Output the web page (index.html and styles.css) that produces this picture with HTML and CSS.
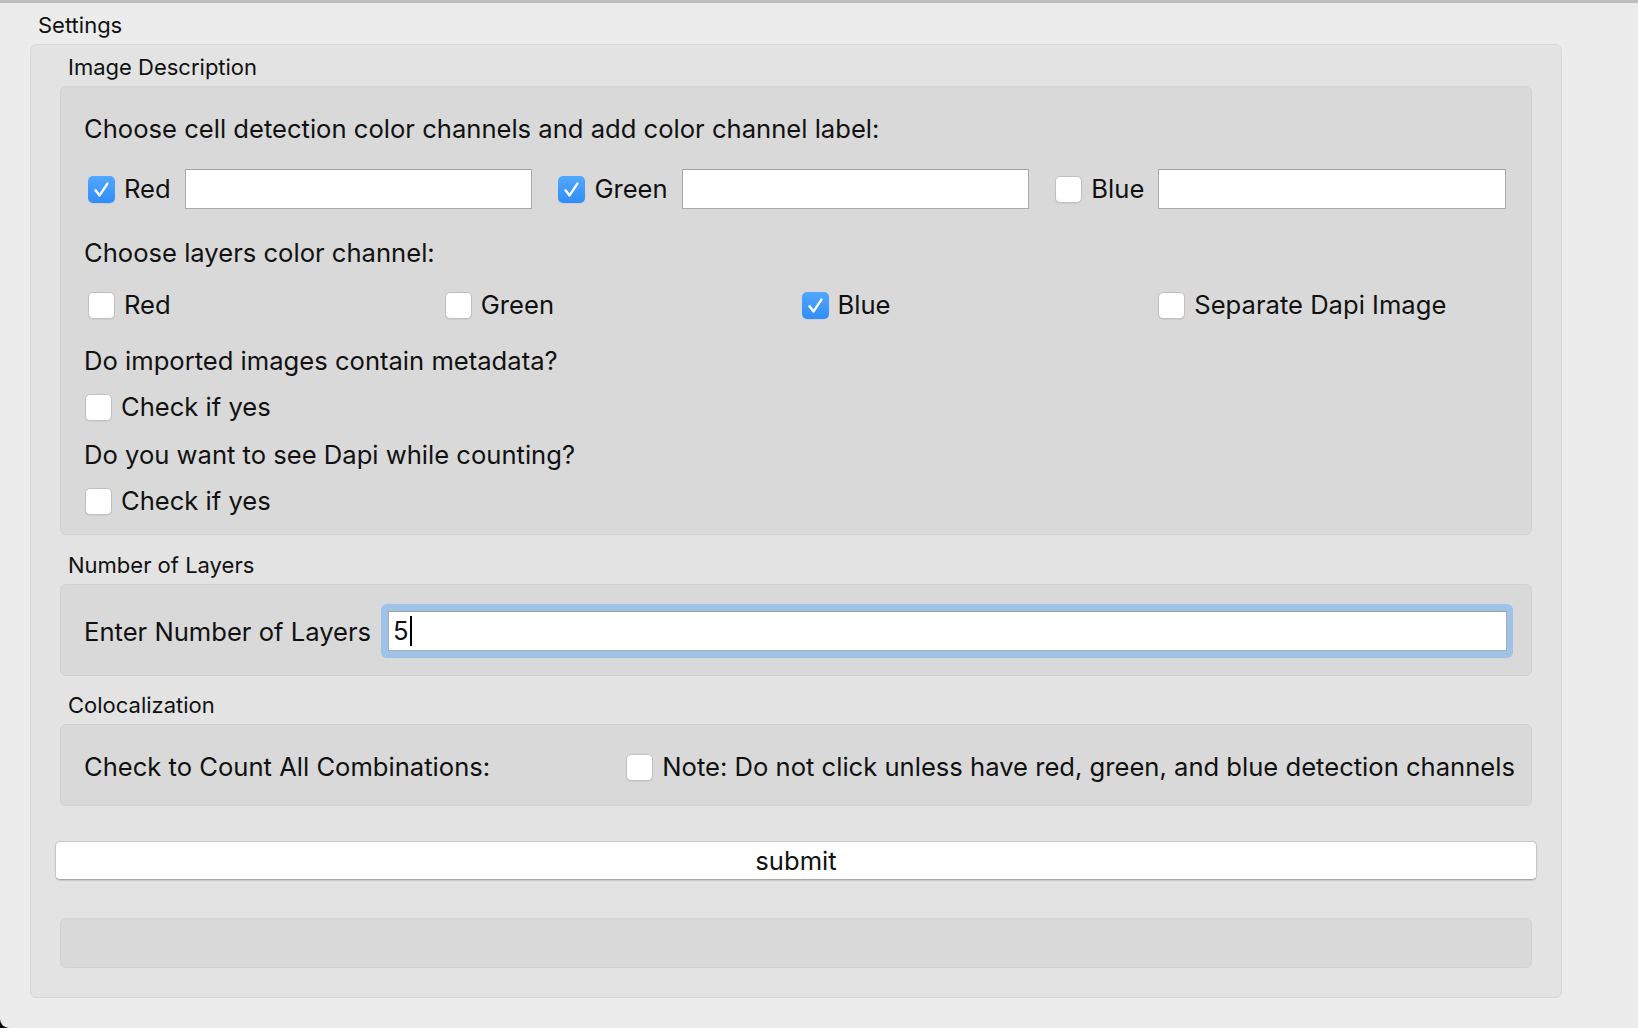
FILE: index.html
```html
<!DOCTYPE html>
<html lang="en">
<head>
<meta charset="utf-8">
<title>Settings</title>
<link rel="stylesheet" href="styles.css">
</head>
<body>
<div class="window">
  <div class="win-title">Settings</div>
  <div class="group">
    <div class="sec-title">Image Description</div>
    <div class="panel panel-desc">
      <div class="line l1">Choose cell detection color channels and add color channel label:</div>
      <div class="row-inputs">
        <span class="cb checked"><svg viewBox="0 0 27 27" width="27" height="27"><path d="M7.5 14.2 L11.6 19.4 L19.4 7.6" fill="none" stroke="#fff" stroke-width="2.4" stroke-linecap="round" stroke-linejoin="round"/></svg></span>
        <span class="cb-label">Red</span>
        <div class="field"></div>
        <span class="cb checked"><svg viewBox="0 0 27 27" width="27" height="27"><path d="M7.5 14.2 L11.6 19.4 L19.4 7.6" fill="none" stroke="#fff" stroke-width="2.4" stroke-linecap="round" stroke-linejoin="round"/></svg></span>
        <span class="cb-label">Green</span>
        <div class="field"></div>
        <span class="cb"></span>
        <span class="cb-label">Blue</span>
        <div class="field"></div>
      </div>
      <div class="line l2">Choose layers color channel:</div>
      <div class="row-grid">
        <div class="opt"><span class="cb"></span><span class="cb-label">Red</span></div>
        <div class="opt"><span class="cb"></span><span class="cb-label">Green</span></div>
        <div class="opt"><span class="cb checked"><svg viewBox="0 0 27 27" width="27" height="27"><path d="M7.5 14.2 L11.6 19.4 L19.4 7.6" fill="none" stroke="#fff" stroke-width="2.4" stroke-linecap="round" stroke-linejoin="round"/></svg></span><span class="cb-label">Blue</span></div>
        <div class="opt"><span class="cb"></span><span class="cb-label">Separate Dapi Image</span></div>
      </div>
      <div class="line l3">Do imported images contain metadata?</div>
      <div class="opt row-yes r3"><span class="cb"></span><span class="cb-label">Check if yes</span></div>
      <div class="line l4">Do you want to see Dapi while counting?</div>
      <div class="opt row-yes r4"><span class="cb"></span><span class="cb-label">Check if yes</span></div>
    </div>

    <div class="sec-title t2">Number of Layers</div>
    <div class="panel panel-layers">
      <span class="layers-label">Enter Number of Layers</span>
      <div class="focus-ring">
        <div class="field field-focus">5<span class="caret"></span></div>
      </div>
    </div>

    <div class="sec-title t3">Colocalization</div>
    <div class="panel panel-coloc">
      <span class="coloc-label">Check to Count All Combinations:</span>
      <div class="opt"><span class="cb"></span><span class="cb-label">Note: Do not click unless have red, green, and blue detection channels</span></div>
    </div>

    <button class="submit" type="button">submit</button>

    <div class="panel panel-empty"></div>
  </div>
</div>
</body>
</html>
```

FILE: styles.css
```css
html {
  background: #000;
}
body {
  margin: 0;
  overflow: hidden;
  font-family: "Inter", "Liberation Sans", sans-serif;
  color: #111;
}
.window {
  width: 1638px;
  height: 1028px;
  box-sizing: border-box;
  background: #ececec;
  border-top: 3px solid #bdbdbd;
  border-bottom-left-radius: 9px;
  padding: 9px 76px 0 30px;
}
.win-title {
  font-size: 22px;
  line-height: 26px;
  height: 26px;
  margin-left: 8px;
  margin-bottom: 6px;
}
.group {
  background: #e3e3e3;
  border: 1px solid #d7d7d7;
  border-radius: 6px;
  padding: 9px 29px 29px 29px;
}
.sec-title {
  font-size: 22px;
  line-height: 26px;
  height: 26px;
  margin-left: 8px;
  margin-bottom: 6px;
}
.sec-title.t2 { margin-top: 17px; }
.sec-title.t3 { margin-top: 16px; }

.panel {
  background: #d9d9d9;
  border: 1px solid #d0d0d0;
  border-radius: 6px;
  padding: 0 16px 0 23px;
  font-size: 25.6px;
}
.panel-desc {
  padding-top: 26px;
  padding-bottom: 18px;
  display: flex;
  flex-direction: column;
}
.line {
  height: 30px;
  line-height: 30px;
  white-space: nowrap;
}
.l1 { margin-top: 1px; margin-bottom: -1px; }
.l2 { margin-top: 29px; }
.l3 { margin-top: 26px; }
.l4 { margin-top: 18px; }

.row-inputs {
  margin-top: 26px;
  height: 40px;
  display: flex;
  align-items: center;
  margin-left: 4px;
  margin-right: 9px;
}
.row-inputs .cb-label {
  margin-right: 14px;
}
.row-inputs .field {
  flex: 1 1 0;
  min-width: 0;
  margin-right: 26px;
}
.row-inputs .field:last-child {
  margin-right: 0;
}
.field {
  height: 40px;
  box-sizing: border-box;
  background: #fff;
  border: 1px solid #ababab;
  border-top-color: #a2a2a2;
}

.cb {
  flex: none;
  width: 27px;
  height: 27px;
  box-sizing: border-box;
  border-radius: 5px;
  background: #fff;
  border: 1px solid #c0c0c0;
  box-shadow: 0 1px 1px rgba(0, 0, 0, 0.06);
  display: inline-block;
}
.cb.checked {
  border: none;
  background: linear-gradient(#52a8ff, #2f8df9);
}
.cb svg {
  display: block;
}
.cb-label {
  margin-left: 9px;
  white-space: nowrap;
  line-height: 30px;
}

.opt {
  display: flex;
  align-items: center;
  height: 30px;
}
.row-grid {
  margin-top: 22px;
  margin-left: 4px;
  display: grid;
  grid-template-columns: repeat(4, 1fr);
}
.row-yes {
  margin-left: 1px;
}
.r3 { margin-top: 16px; }
.r4 { margin-top: 16px; }

.panel-layers {
  display: flex;
  align-items: center;
  padding-top: 19px;
  padding-bottom: 17px;
  padding-right: 18px;
}
.layers-label {
  white-space: nowrap;
  margin-right: 10px;
  line-height: 30px;
  position: relative;
  top: 1px;
}
.focus-ring {
  flex: 1;
  background: #9ec2e8;
  border-radius: 6px;
  padding: 7px 6px 7px 7px;
}
.field-focus {
  line-height: 38px;
  padding-left: 4px;
  display: flex;
  align-items: center;
}
.caret {
  display: inline-block;
  width: 2px;
  height: 30px;
  background: #000;
  margin-left: 1px;
}

.panel-coloc {
  display: flex;
  align-items: center;
  justify-content: space-between;
  padding-top: 27px;
  padding-bottom: 23px;
  height: 30px;
}
.coloc-label {
  white-space: nowrap;
  line-height: 30px;
}

.submit {
  display: block;
  margin: 35px -5px 0 -5px;
  width: calc(100% + 10px);
  height: 39px;
  background: #fff;
  border: 1px solid #c6c6c6;
  border-bottom-color: #a9a9a9;
  border-radius: 5px;
  box-shadow: 0 1px 1px rgba(0, 0, 0, 0.12);
  font-family: "Inter", "Liberation Sans", sans-serif;
  font-size: 25.6px;
  color: #111;
  padding: 0;
  line-height: 36px;
}
.panel-empty {
  margin-top: 38px;
  height: 48px;
  padding: 0;
}
```
